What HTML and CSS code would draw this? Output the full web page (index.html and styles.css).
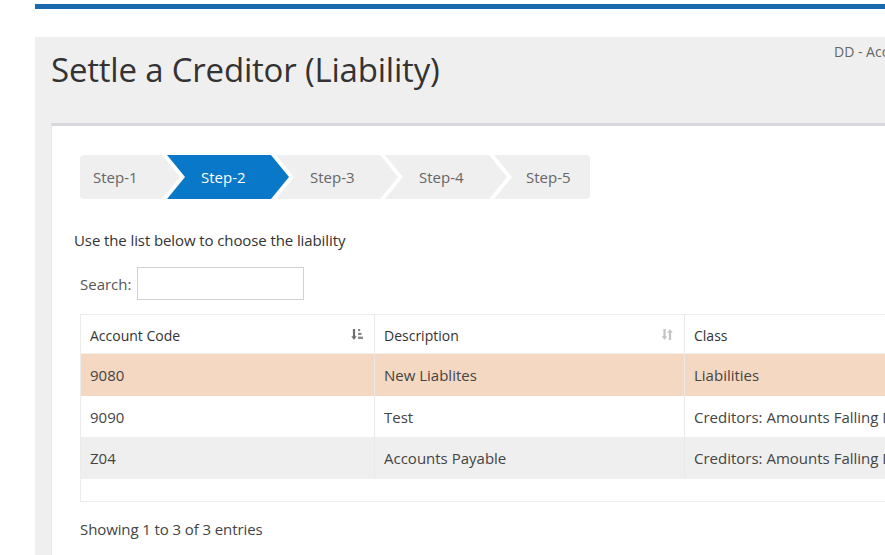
FILE: index.html
```html
<!DOCTYPE html>
<html lang="en">
<head>
<meta charset="utf-8">
<title>Settle a Creditor (Liability)</title>
<link rel="stylesheet" href="styles.css">
</head>
<body>
<div class="topbar"></div>
<div class="page">
  <div class="page-head">
    <h1 class="title">Settle a Creditor (Liability)</h1>
    <div class="company">DD - Accounts Demo</div>
  </div>
  <div class="card">
    <div class="steps">
      <div class="step step-first">Step-1</div>
      <div class="step step-active">Step-2</div>
      <div class="step">Step-3</div>
      <div class="step">Step-4</div>
      <div class="step step-last">Step-5</div>
    </div>
    <p class="intro">Use the list below to choose the liability</p>
    <div class="search">
      <label class="search-label" for="q">Search:</label>
      <input class="search-input" id="q" type="text">
    </div>
    <div class="grid">
      <table class="tbl">
        <thead>
          <tr>
            <th class="col-code"><span>Account Code</span>
              <svg class="sort" width="13" height="13" viewBox="0 0 13 13"><path d="M3 1v8.5" stroke="#6f6f6f" stroke-width="2.2"/><path d="M0.3 8.2l2.7 3.8 2.7-3.8z" fill="#6f6f6f"/><rect x="7" y="1" width="2.2" height="2.2" fill="#8a8a8a"/><rect x="7" y="4.8" width="3.5" height="2.2" fill="#8a8a8a"/><rect x="7" y="8.6" width="5" height="2.4" fill="#8a8a8a"/></svg>
            </th>
            <th class="col-desc"><span>Description</span>
              <svg class="sort" width="13" height="13" viewBox="0 0 13 13"><path d="M3.5 1v8.5" stroke="#c4c4c4" stroke-width="2.2"/><path d="M0.8 8.2l2.7 3.8 2.7-3.8z" fill="#c4c4c4"/><path d="M9 3.5v8.5" stroke="#c4c4c4" stroke-width="2.2"/><path d="M6.3 4.8l2.7-3.8 2.7 3.8z" fill="#c4c4c4"/></svg>
            </th>
            <th class="col-class"><span>Class</span></th>
          </tr>
        </thead>
        <tbody>
          <tr class="row-selected"><td>9080</td><td>New Liablites</td><td>Liabilities</td></tr>
          <tr class="row-plain"><td>9090</td><td>Test</td><td>Creditors: Amounts Falling Due Within One Year</td></tr>
          <tr class="row-alt"><td>Z04</td><td>Accounts Payable</td><td>Creditors: Amounts Falling Due Within One Year</td></tr>
        </tbody>
      </table>
      <div class="filler"></div>
    </div>
    <p class="info">Showing 1 to 3 of 3 entries</p>
  </div>
</div>
</body>
</html>
```
FILE: styles.css
```css
html, body {
  margin: 0;
  padding: 0;
  background: #ffffff;
  overflow: hidden;
}
body {
  font-family: "Open Sans", "Noto Sans", sans-serif;
  color: #333;
  width: 1400px;
  height: 555px;
}
.topbar {
  margin: 4px 0 0 35px;
  height: 5px;
  background: #1b69ad;
}
.page {
  margin: 28px 0 0 35px;
  background: #f0efef;
  padding: 0 0 0 16px;
  height: 600px;
}
.page-head {
  display: flex;
  align-items: flex-start;
  height: 86px;
}
.title {
  margin: 0;
  flex: 0 0 783px;
  font-size: 33px;
  font-weight: 400;
  color: #333;
  line-height: 44px;
  padding-top: 11px;
  letter-spacing: -0.2px;
}
.company {
  font-size: 14px;
  color: #666;
  line-height: 20px;
  padding-top: 5px;
  white-space: nowrap;
}
.card {
  background: #ffffff;
  border-top: 3px solid #d6d8db;
  border-left: 1px solid #e8e8e8;
  padding: 29px 0 0 22px;
  height: 500px;
}
.steps {
  display: flex;
  height: 44px;
  width: 510px;
  margin-left: 6px;
  border-radius: 4px;
  overflow: hidden;
}
.step {
  flex: 0 0 auto;
  box-sizing: border-box;
  width: 122px;
  margin-left: -13px;
  padding-left: 34px;
  display: flex;
  align-items: center;
  background: #efefef;
  color: #666;
  font-size: 15px;
  clip-path: polygon(0 0, calc(100% - 18px) 0, 100% 50%, calc(100% - 18px) 100%, 0 100%, 18px 50%);
}
.step-first {
  width: 100px;
  margin-left: 0;
  padding-left: 13px;
  clip-path: polygon(0 0, calc(100% - 18px) 0, 100% 50%, calc(100% - 18px) 100%, 0 100%);
}
.step-last {
  width: 96px;
  padding-left: 32px;
  clip-path: polygon(0 0, 100% 0, 100% 100%, 0 100%, 18px 50%);
}
.step-active {
  background: #0a78c8;
  color: #ffffff;
}
.intro {
  margin: 31px 0 0 0;
  font-size: 15px;
  line-height: 20px;
  color: #333;
  letter-spacing: -0.1px;
}
.search {
  display: flex;
  align-items: center;
  margin: 17px 0 0 6px;
  height: 33px;
}
.search-label {
  font-size: 15px;
  color: #555;
  margin-right: 6px;
}
.search-input {
  box-sizing: border-box;
  width: 167px;
  height: 33px;
  border: 1px solid #d2d2d2;
  margin: 0;
  padding: 0 6px;
  background: #fff;
}
.grid {
  margin: 14px 0 0 6px;
  width: 1200px;
  border: 1px solid #ececec;
}
.tbl {
  border-collapse: collapse;
  width: 100%;
  font-size: 15px;
}
.tbl th, .tbl td {
  text-align: left;
  font-weight: 400;
  padding: 0 10px 0 9px;
  border-left: 1px solid #e9e9e9;
  white-space: nowrap;
}
.tbl th:first-child, .tbl td:first-child {
  border-left: none;
}
.tbl th {
  height: 38px;
  color: #333;
  font-size: 14px;
  border-bottom: 1px solid #f0f0f0;
}
.tbl th span {
  vertical-align: middle;
}
.col-code { width: 274px; }
.col-desc { width: 290px; }
.col-class { width: auto; }
.sort {
  float: right;
  margin-top: 4px;
}
.tbl td {
  color: #444;
}
.row-selected td {
  height: 42px;
  background: #f4d8c2;
}
.row-plain td {
  height: 41px;
  background: #ffffff;
}
.row-alt td {
  height: 42px;
  background: #efefef;
}
.filler {
  height: 22px;
}
.info {
  margin: 17px 0 0 6px;
  font-size: 15px;
  line-height: 20px;
  color: #444;
  letter-spacing: -0.1px;
}
```
